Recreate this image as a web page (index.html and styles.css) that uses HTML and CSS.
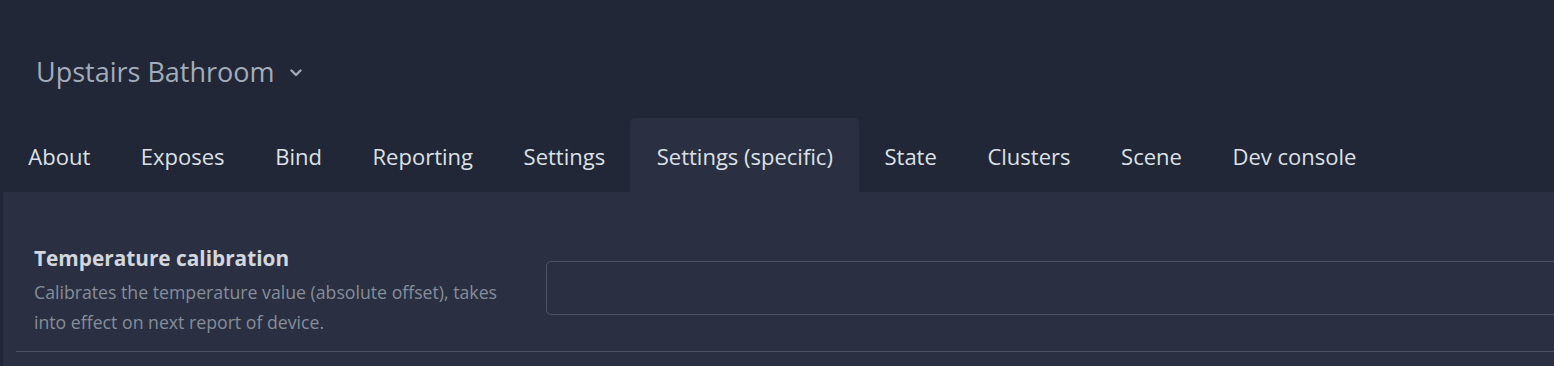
FILE: index.html
```html
<!DOCTYPE html>
<html lang="en">
<head>
<meta charset="utf-8">
<title>Upstairs Bathroom</title>
<link rel="stylesheet" href="styles.css">
</head>
<body>
<div class="page">
  <header class="header">
    <h1 class="device-name">Upstairs Bathroom
      <svg class="chevron" width="12" height="8" viewBox="0 0 12 8"><path d="M1.5 1.5 L6 6 L10.5 1.5" fill="none" stroke="currentColor" stroke-width="2.4" stroke-linecap="round" stroke-linejoin="round"/></svg>
    </h1>
  </header>
  <nav class="tabs">
    <a class="tab">About</a>
    <a class="tab">Exposes</a>
    <a class="tab">Bind</a>
    <a class="tab">Reporting</a>
    <a class="tab">Settings</a>
    <a class="tab active">Settings (specific)</a>
    <a class="tab">State</a>
    <a class="tab">Clusters</a>
    <a class="tab">Scene</a>
    <a class="tab">Dev console</a>
  </nav>
  <main class="panel">
    <div class="row">
      <div class="label">
        <div class="label-title">Temperature calibration</div>
        <div class="label-desc">Calibrates the temperature value (absolute offset), takes into effect on next report of device.</div>
      </div>
      <input class="field" type="text">
    </div>
  </main>
</div>
</body>
</html>
```
FILE: styles.css
```css
html, body {
  margin: 0;
  padding: 0;
  background: #212736;
  overflow: hidden;
  font-family: "Open Sans", "Noto Sans", sans-serif;
}
.page {
  width: 1800px;
  height: 366px;
  overflow: hidden;
}
.header {
  padding: 56px 0 0 36px;
  height: 62px;
}
.device-name {
  margin: 0;
  font-size: 27px;
  font-weight: 400;
  line-height: 32px;
  color: #a3acba;
  display: flex;
  align-items: center;
  gap: 15px;
}
.chevron {
  color: #a0a8b6;
  margin-top: 2px;
}
.tabs {
  display: flex;
  margin-left: 3px;
  height: 74px;
}
.tab {
  padding: 0 25.3px;
  line-height: 76px;
  font-size: 22px;
  color: #dde1e6;
  border-radius: 5px 5px 0 0;
}
.tab.active {
  background: #2a3042;
  padding: 0 26.3px;
}
.panel {
  margin-left: 3px;
  background: #2a3042;
  padding-top: 37px;
  height: 137px;
}
.row {
  margin-left: 13px;
  padding: 14px 0 14px 18px;
  border-bottom: 1px solid #4a5061;
  display: flex;
  align-items: flex-start;
}
.label {
  width: 482px;
  flex: none;
}
.label-title {
  font-size: 20.8px;
  font-weight: 700;
  line-height: 30px;
  margin-bottom: 4px;
  color: #d3d7dd;
}
.label-desc {
  font-size: 17.7px;
  line-height: 30px;
  color: #868d99;
}
.field {
  margin: 18px 0 0 30px;
  width: 1200px;
  height: 54px;
  box-sizing: border-box;
  background: transparent;
  border: 1px solid #4c5366;
  border-radius: 5px;
}
```
